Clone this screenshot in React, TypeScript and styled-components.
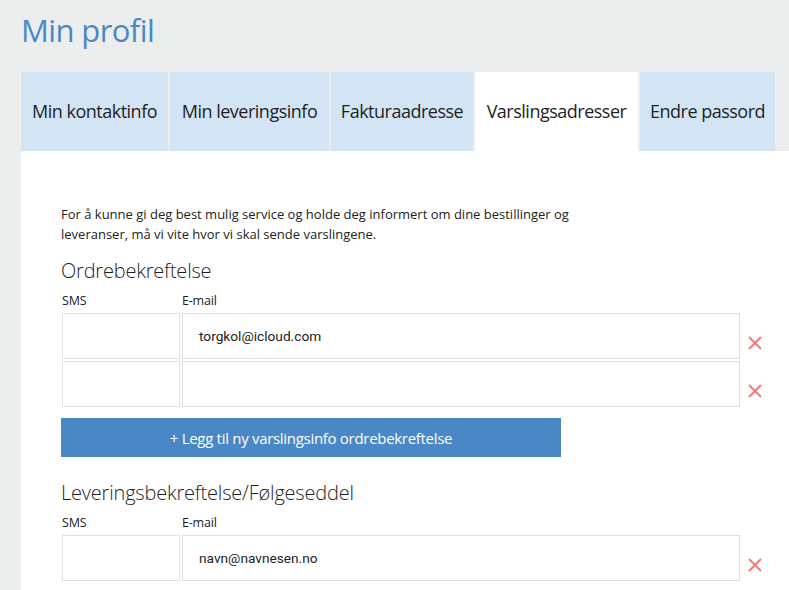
import React from "react";
import styled, { createGlobalStyle } from "styled-components";

const GlobalStyle = createGlobalStyle`
  html, body { margin: 0; padding: 0; }
  body {
    background: #eceeee;
    font-family: "Open Sans", sans-serif;
    color: #222;
  }
  * { box-sizing: border-box; }
`;

const Page = styled.div`
  height: 590px;
  padding-left: 21px;
  background: #eceeee;
  overflow: hidden;
  display: flex;
  flex-direction: column;
`;

const Title = styled.h1`
  margin: 0;
  height: 72px;
  flex: 0 0 72px;
  padding-top: 11px;
  font-family: "Open Sans", sans-serif;
  font-weight: 500;
  font-size: 31px;
  line-height: 38px;
  color: #4a88c8;
  letter-spacing: -0.6px;
`;

const TabBar = styled.div`
  display: flex;
  gap: 2px;
  flex: 0 0 79px;
  margin-right: 14px;
`;

const Tab = styled.div<{ $active?: boolean; $w: number }>`
  flex: 0 0 ${(p) => p.$w}px;
  display: flex;
  align-items: center;
  justify-content: center;
  padding-bottom: 1px;
  background: ${(p) => (p.$active ? "#ffffff" : "#d3e5f4")};
  font-family: "Open Sans", sans-serif;
  font-size: 18px;
  letter-spacing: -0.5px;
  color: #1e1e24;
  white-space: nowrap;
`;

const Panel = styled.div`
  flex: 1;
  background: #ffffff;
  padding: 53px 0 0 40px;
`;

const Intro = styled.p`
  margin: 0;
  width: 540px;
  font-family: "Open Sans", sans-serif;
  font-size: 13px;
  line-height: 20px;
  color: #222;
  letter-spacing: 0;
`;

const SectionTitle = styled.h2<{ $top: number }>`
  margin: ${(p) => p.$top}px 0 0 0;
  font-family: "Open Sans", sans-serif;
  font-weight: 300;
  font-size: 20px;
  line-height: 26px;
  color: #1e1e24;
  letter-spacing: -0.2px;
`;

const Labels = styled.div`
  display: flex;
  gap: 2px;
  margin-top: 7px;
  padding-left: 1px;
  height: 20px;
  font-family: "Open Sans", sans-serif;
  font-size: 12.5px;
  line-height: 20px;
  color: #222;
  letter-spacing: -0.2px;
`;

const Label = styled.span<{ $w?: number }>`
  width: ${(p) => (p.$w ? `${p.$w}px` : "auto")};
`;

const Rows = styled.div`
  display: flex;
  flex-direction: column;
  gap: 2px;
  margin-top: 2px;
`;

const Row = styled.div`
  display: flex;
  gap: 2px;
  padding-left: 1px;
  height: 46px;
`;

const Field = styled.div<{ $w: number }>`
  width: ${(p) => p.$w}px;
  height: 46px;
  border: 1px solid #e0e0e0;
  background: #fff;
  display: flex;
  align-items: center;
  padding-left: 16px;
  font-family: "Roboto", "Liberation Sans", sans-serif;
  font-size: 13.7px;
  color: #222;
`;

const Remove = styled.button`
  margin-left: 6px;
  margin-top: 23px;
  width: 14px;
  height: 14px;
  padding: 0;
  border: 0;
  background: none;
  display: flex;
  cursor: pointer;
`;

const AddButton = styled.button`
  margin-top: 11px;
  width: 500px;
  height: 39px;
  border: 0;
  background: #4a87c6;
  color: #fff;
  font-family: "Open Sans", sans-serif;
  font-size: 15px;
  letter-spacing: -0.3px;
  cursor: pointer;
`;

const Cross = () => (
  <svg width="14" height="14" viewBox="0 0 14 14">
    <path d="M1 1 L13 13 M13 1 L1 13" stroke="#f27a7a" strokeWidth="2" />
  </svg>
);

const tabs = [
  { label: "Min kontaktinfo", w: 147 },
  { label: "Min leveringsinfo", w: 159 },
  { label: "Fakturaadresse", w: 142 },
  { label: "Varslingsadresser", w: 163, active: true },
  { label: "Endre passord", w: 135 },
];

const FieldRow = ({ email }: { email: string }) => (
  <Row>
    <Field $w={118} />
    <Field $w={558}>{email}</Field>
    <Remove aria-label="Fjern">
      <Cross />
    </Remove>
  </Row>
);

export default function App() {
  return (
    <Page>
      <GlobalStyle />
      <Title>Min profil</Title>
      <TabBar>
        {tabs.map((t) => (
          <Tab key={t.label} $w={t.w} $active={t.active}>
            {t.label}
          </Tab>
        ))}
      </TabBar>
      <Panel>
        <Intro>
          For å kunne gi deg best mulig service og holde deg informert om dine bestillinger og
          leveranser, må vi vite hvor vi skal sende varslingene.
        </Intro>
        <SectionTitle $top={14}>Ordrebekreftelse</SectionTitle>
        <Labels>
          <Label $w={118}>SMS</Label>
          <Label>E-mail</Label>
        </Labels>
        <Rows>
          <FieldRow email="torgkol@icloud.com" />
          <FieldRow email="" />
        </Rows>
        <AddButton>+ Legg til ny varslingsinfo ordrebekreftelse</AddButton>
        <SectionTitle $top={23}>Leveringsbekreftelse/Følgeseddel</SectionTitle>
        <Labels>
          <Label $w={118}>SMS</Label>
          <Label>E-mail</Label>
        </Labels>
        <Rows>
          <FieldRow email="navn@navnesen.no" />
        </Rows>
      </Panel>
    </Page>
  );
}
